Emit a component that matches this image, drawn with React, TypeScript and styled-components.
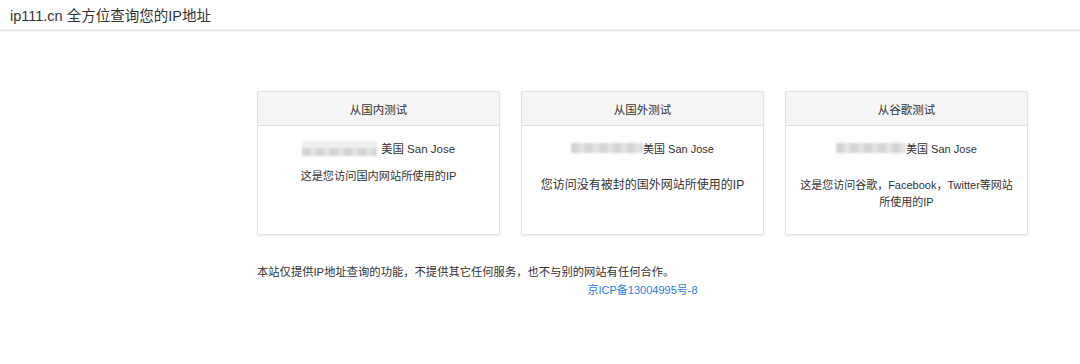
import styled, { createGlobalStyle } from "styled-components";

const GlobalStyle = createGlobalStyle`
    body {
        margin: 0;
        background: #fff;
        font-family: "Liberation Sans", "Noto Sans CJK SC", sans-serif;
        color: #333;
    }
`

const TopBar = styled.div`
    height: 29px;
    display: flex;
    align-items: center;
    padding-left: 10px;
    font-size: 14.5px;
    color: #333;
    box-shadow: 0 1px 2px rgba(0, 0, 0, 0.12);
    border-bottom: 1px solid #ececec;
`

const Main = styled.div`
    width: 771px;
    padding: 61px 0 0 257px;
`

const CardRow = styled.div`
    display: grid;
    grid-template-columns: repeat(3, 243px);
    column-gap: 21px;
`

const Card = styled.div`
    height: 142px;
    border: 1px solid #e2e2e2;
    border-radius: 2px;
    box-shadow: 0 1px 2px rgba(0, 0, 0, 0.08);
    display: flex;
    flex-direction: column;
`

const CardHead = styled.div`
    height: 33px;
    background: #f5f5f5;
    border-bottom: 1px solid #e0e0e0;
    display: flex;
    align-items: center;
    justify-content: center;
    font-size: 11.5px;
    color: #333;
`

const CardBody = styled.div`
    padding: 13px 12px 0;
    text-align: center;
    font-size: 12px;
`

const IpLine = styled.div<{ big?: boolean }>`
    display: flex;
    justify-content: center;
    align-items: center;
    height: 18px;
    font-size: ${({ big }) => (big ? '11.5px' : '11px')};
    gap: ${({ big }) => (big ? '4px' : '0px')};
`

const Blur = styled.span<{ w: number, rows: number }>`
    display: inline-block;
    width: ${({ w }) => w}px;
    height: ${({ rows }) => (rows === 2 ? '15px' : '10px')};
    filter: blur(1.2px);
    background:
        ${({ rows }) => rows === 2
            ? 'linear-gradient(#f0f0f0 0 45%, transparent 45%),'
            : ''}
        repeating-linear-gradient(90deg, #d4d4d4 0 8px, #e2e2e2 8px 14px);
`

const Desc = styled.div<{ top: number, size: number }>`
    margin-top: ${({ top }) => top}px;
    font-size: ${({ size }) => size}px;
    line-height: 17px;
`

const Note = styled.div`
    margin-top: 28px;
    font-size: 11.3px;
    line-height: 18px;
`

const Beian = styled.a`
    display: block;
    text-align: center;
    font-size: 11px;
    color: #2a7be4;
    text-decoration: none;
`

const cards = [
    { title: "从国内测试", blurW: 75, rows: 2, big: true, top: 11, size: 11.2, desc: "这是您访问国内网站所使用的IP" },
    { title: "从国外测试", blurW: 72, rows: 1, big: false, top: 20, size: 12, desc: "您访问没有被封的国外网站所使用的IP" },
    { title: "从谷歌测试", blurW: 70, rows: 1, big: false, top: 20, size: 11, desc: "这是您访问谷歌，Facebook，Twitter等网站所使用的IP" },
];

function App() {
    return (
        <>
            <GlobalStyle />
            <TopBar>ip111.cn 全方位查询您的IP地址</TopBar>
            <Main>
                <CardRow>
                    {cards.map((c, i) =>
                        <Card key={i}>
                            <CardHead>{c.title}</CardHead>
                            <CardBody>
                                <IpLine big={c.big}>
                                    <Blur w={c.blurW} rows={c.rows} />
                                    <span>美国 San Jose</span>
                                </IpLine>
                                <Desc top={c.top} size={c.size}>{c.desc}</Desc>
                            </CardBody>
                        </Card>
                    )}
                </CardRow>
                <Note>本站仅提供IP地址查询的功能，不提供其它任何服务，也不与别的网站有任何合作。</Note>
                <Beian href="#">京ICP备13004995号-8</Beian>
            </Main>
        </>
    );
}

export default App;
